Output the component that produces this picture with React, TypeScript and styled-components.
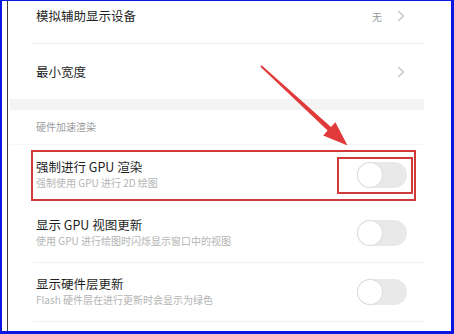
import React from "react";
import styled, { createGlobalStyle } from "styled-components";

const Global = createGlobalStyle`
  html, body { margin: 0; padding: 0; background: #ffffff; }
  body { font-family: "Noto Sans CJK SC", "Noto Sans", sans-serif; }
  * { box-sizing: border-box; }
`;

const Frame = styled.div`
  position: relative;
  width: 454px;
  height: 334px;
  border-style: solid;
  border-color: #0b16e2;
  border-width: 1px 3px 3px 2px;
  background: #ffffff;
  overflow: hidden;
`;

const Panel = styled.div`
  height: 100%;
  margin-left: 5px;
  border-left: 1px solid #3c3c3c;
  padding-left: 2px;
`;

const List = styled.div`
  width: 414px;
  display: flex;
  flex-direction: column;
`;

const NavRow = styled.div<{ $h: number; $pb?: number; $divider?: boolean }>`
  height: ${(p) => p.$h}px;
  margin-left: 23px;
  padding: 0 19px ${(p) => p.$pb ?? 0}px 3px;
  display: flex;
  align-items: center;
  border-bottom: ${(p) => (p.$divider ? "1px solid #ececec" : "none")};
`;

const Title = styled.div`
  flex: 1;
  font-size: 12.5px;
  line-height: 16px;
  color: #1f1f1f;
`;

const Value = styled.span`
  font-size: 10px;
  color: #9a9a9a;
  margin-right: 15px;
`;

const Band = styled.div`
  height: 11px;
  background: #f4f4f4;
`;

const SectionHeader = styled.div`
  height: 35px;
  padding: 0 0 2px 26px;
  display: flex;
  align-items: center;
  font-size: 10px;
  color: #9c9c9c;
  border-bottom: 1px solid #f6f6f6;
`;

const SwitchRow = styled.div<{ $divider?: boolean }>`
  height: 59px;
  margin-left: 23px;
  padding: 0 17px 0 3px;
  display: flex;
  align-items: center;
  border-bottom: ${(p) => (p.$divider ? "1px solid #f1f1f1" : "none")};
`;

const TextBlock = styled.div`
  flex: 1;
  display: flex;
  flex-direction: column;
  margin-top: -1px;
`;

const Sub = styled.div`
  font-size: 10px;
  line-height: 14px;
  color: #b4b4b4;
  margin-top: 1px;
`;

const Track = styled.div`
  width: 50px;
  height: 26px;
  border-radius: 13px;
  background: #e9e9e9;
  padding: 1px;
  display: flex;
  align-items: center;
`;

const Knob = styled.div`
  width: 24px;
  height: 24px;
  border-radius: 50%;
  background: #ffffff;
  box-shadow: 0 0 0 1px #dddddd;
`;

const RedBox = styled.div<{ $x: number; $y: number; $w: number; $h: number }>`
  position: absolute;
  left: ${(p) => p.$x - 2}px;
  top: ${(p) => p.$y - 1}px;
  width: ${(p) => p.$w}px;
  height: ${(p) => p.$h}px;
  border: 2px solid #d03a3a;
  pointer-events: none;
`;

const Overlay = styled.svg`
  position: absolute;
  left: -2px;
  top: -1px;
  width: 454px;
  height: 334px;
  pointer-events: none;
`;

const Chevron = () => (
  <svg width="8" height="12" viewBox="0 0 8 12">
    <path d="M1 0.8 L6.6 6 L1 11.2" fill="none" stroke="#bdbdbd" strokeWidth="1.1" />
  </svg>
);

const Switch = () => (
  <Track>
    <Knob />
  </Track>
);

export default function App() {
  return (
    <>
      <Global />
      <Frame>
        <Panel>
          <List>
            <NavRow $h={43} $pb={12} $divider>
              <Title>模拟辅助显示设备</Title>
              <Value>无</Value>
              <Chevron />
            </NavRow>
            <NavRow $h={55}>
              <Title>最小宽度</Title>
              <Chevron />
            </NavRow>
            <Band />
            <SectionHeader>硬件加速渲染</SectionHeader>
            <SwitchRow>
              <TextBlock>
                <Title>强制进行 GPU 渲染</Title>
                <Sub>强制使用 GPU 进行 2D 绘图</Sub>
              </TextBlock>
              <Switch />
            </SwitchRow>
            <SwitchRow $divider>
              <TextBlock>
                <Title>显示 GPU 视图更新</Title>
                <Sub>使用 GPU 进行绘图时闪烁显示窗口中的视图</Sub>
              </TextBlock>
              <Switch />
            </SwitchRow>
            <SwitchRow $divider>
              <TextBlock>
                <Title>显示硬件层更新</Title>
                <Sub>Flash 硬件层在进行更新时会显示为绿色</Sub>
              </TextBlock>
              <Switch />
            </SwitchRow>
          </List>
        </Panel>
        <RedBox $x={31} $y={150} $w={385} $h={51} />
        <RedBox $x={337} $y={157} $w={76} $h={37} />
        <Overlay viewBox="0 0 454 334">
          <polygon
            points="260.4,66.7 261.6,65.3 331.0,127.0 335.4,122.2 347.5,145.5 323.2,135.4 327.6,130.6"
            fill="#e03a3a"
          />
        </Overlay>
      </Frame>
    </>
  );
}
